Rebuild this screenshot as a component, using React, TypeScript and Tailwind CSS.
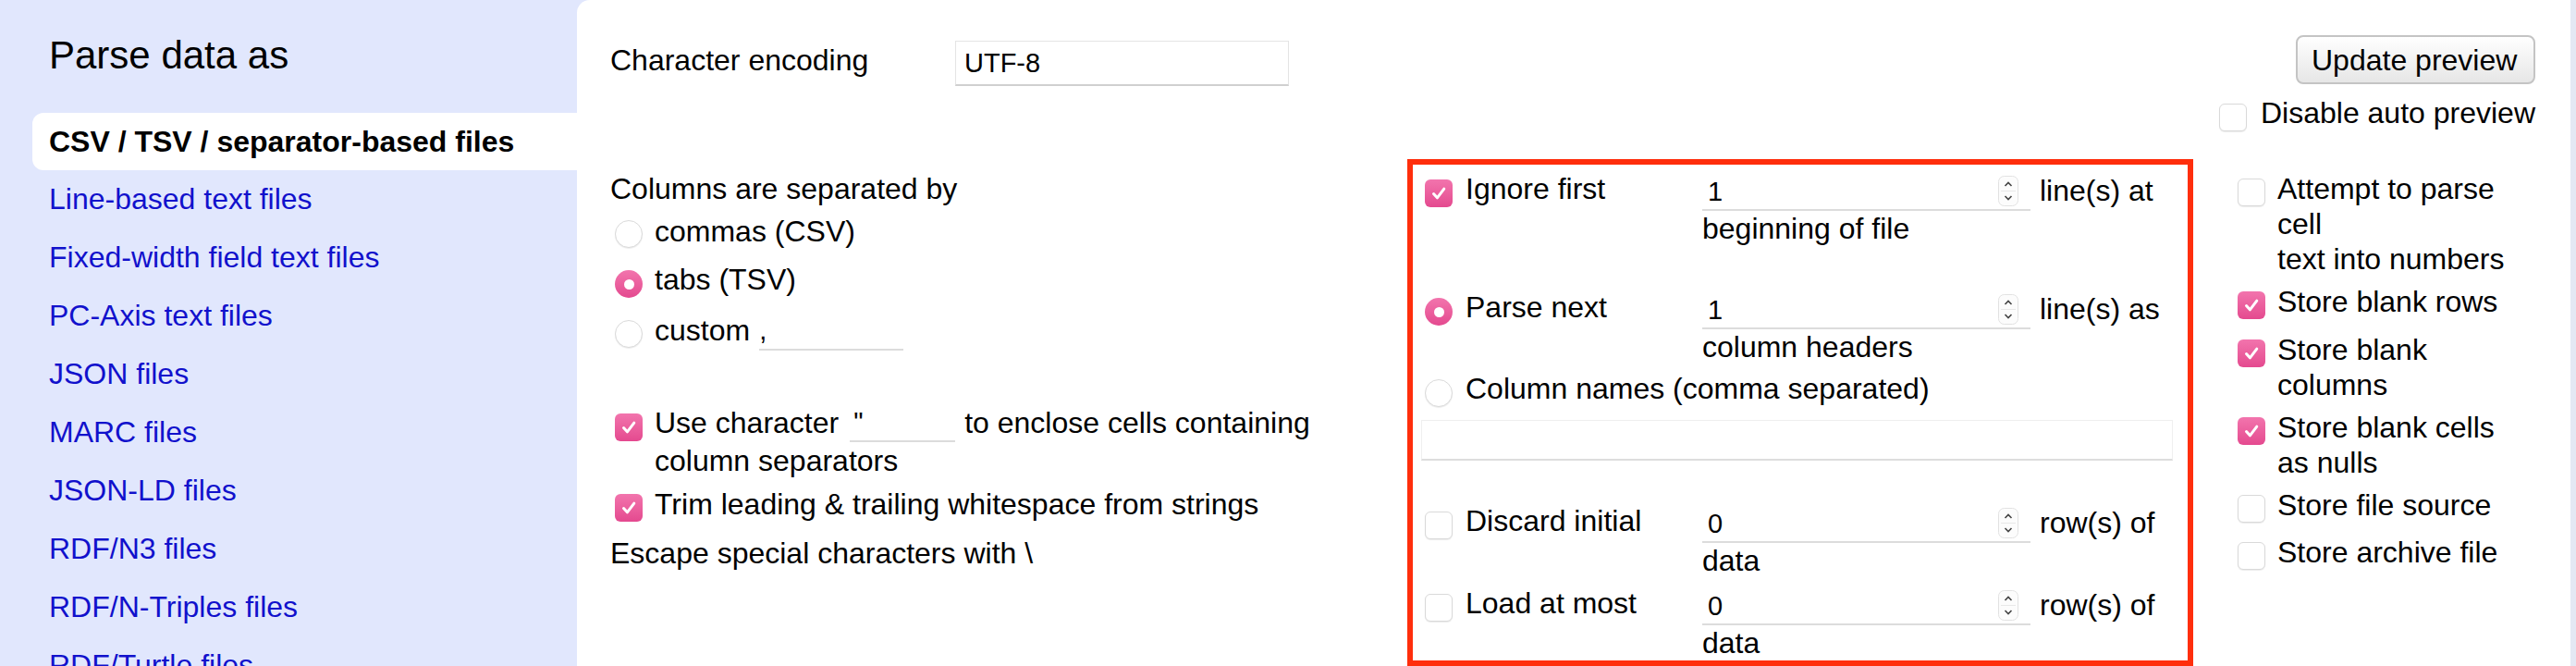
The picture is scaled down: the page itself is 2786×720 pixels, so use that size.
import React from 'react'

const links = [
  'Line-based text files',
  'Fixed-width field text files',
  'PC-Axis text files',
  'JSON files',
  'MARC files',
  'JSON-LD files',
  'RDF/N3 files',
  'RDF/N-Triples files',
  'RDF/Turtle files',
]

function CheckBox({ checked = false, className = '' }: { checked?: boolean; className?: string }) {
  if (checked) {
    return (
      <div className={`w-[30px] h-[30px] shrink-0 rounded-[6px] bg-linear-to-b from-[#f274ad] to-[#e4498f] flex items-center justify-center ${className}`}>
        <svg width="20" height="20" viewBox="0 0 20 20">
          <path d="M4.5 10.5 L8.4 14.8 L15.8 5.2" fill="none" stroke="white" strokeWidth="3" strokeLinecap="round" strokeLinejoin="round" />
        </svg>
      </div>
    )
  }
  return (
    <div className={`w-[30px] h-[30px] shrink-0 rounded-[6px] bg-white border border-[#d9d9d9] shadow-[0_1px_1px_rgba(0,0,0,0.08)] ${className}`} />
  )
}

function Radio({ checked = false, className = '' }: { checked?: boolean; className?: string }) {
  if (checked) {
    return (
      <div className={`w-[30px] h-[30px] shrink-0 rounded-full bg-linear-to-b from-[#f274ad] to-[#e4498f] flex items-center justify-center ${className}`}>
        <div className="w-[11px] h-[11px] rounded-full bg-white" />
      </div>
    )
  }
  return (
    <div className={`w-[30px] h-[30px] shrink-0 rounded-full bg-white border border-[#dadada] shadow-[0_1px_1px_rgba(0,0,0,0.08)] ${className}`} />
  )
}

function Spinner() {
  return (
    <svg width="22" height="33" viewBox="0 0 22 33" className="absolute right-[13px] top-[5px]">
      <rect x="0.5" y="0.5" width="21" height="32" rx="6" fill="#fcfcfc" stroke="#e2e2e2" />
      <line x1="3" y1="16.5" x2="19" y2="16.5" stroke="#e8e8e8" />
      <path d="M7.5 11 L11 7.5 L14.5 11" fill="none" stroke="#444" strokeWidth="1.6" />
      <path d="M7.5 22 L11 25.5 L14.5 22" fill="none" stroke="#444" strokeWidth="1.6" />
    </svg>
  )
}

function NumberRow({ control, label, value, after, below, className = '' }: {
  control: React.ReactNode
  label: string
  value: string
  after: string
  below: string
  className?: string
}) {
  return (
    <div className={className}>
      <div className="flex items-start h-[43px]">
        <div className="w-[300px] flex items-start gap-[14px]">
          <div className="mt-[9px]">{control}</div>
          <span className="leading-[38px] whitespace-nowrap">{label}</span>
        </div>
        <div className="relative w-[355px] h-[43px] border-b-2 border-[#dcdcdc] pl-[6px] pt-[3px] text-[29px] leading-[38px]">
          {value}
          <Spinner />
        </div>
        <span className="ml-[10px] pt-[2px] leading-[38px] whitespace-nowrap">{after}</span>
      </div>
      <div className="pl-[300px] leading-[38px]">{below}</div>
    </div>
  )
}

function Option({ checked, text, className = '' }: { checked?: boolean; text: React.ReactNode; className?: string }) {
  return (
    <div className={`flex items-start gap-[13px] ${className}`}>
      <CheckBox checked={checked} className="mt-[8px]" />
      <span className="w-[262px] leading-[38px]">{text}</span>
    </div>
  )
}

export default function App() {
  return (
    <div className="flex h-[720px] w-[2786px] overflow-hidden bg-[#e1e7fd] text-[32px] text-black font-['Liberation_Sans',Arial,sans-serif]">
      {/* Sidebar */}
      <div className="w-[624px] shrink-0 pt-[36px]">
        <h1 className="pl-[53px] text-[42px] leading-[48px] font-normal">Parse data as</h1>
        <div className="mt-[38px] ml-[35px] h-[62px] rounded-l-[12px] bg-white pl-[18px] font-bold leading-[62px] whitespace-nowrap">
          CSV / TSV / separator-based files
        </div>
        {links.map((l) => (
          <div key={l} className="h-[63px] pl-[53px] leading-[63px] text-[#11c] whitespace-nowrap">
            {l}
          </div>
        ))}
      </div>

      {/* Options panel */}
      <div className="flex-1 bg-white rounded-tl-[14px] pl-[36px] pr-[38px]">
        <div className="flex justify-between h-[172px]">
          <div className="flex items-start pt-[44px]">
            <span className="w-[373px] mt-[2px] leading-[38px]">Character encoding</span>
            <div className="w-[361px] h-[49px] border border-[#e4e4e4] border-b-2 border-b-[#d0d0d0] pl-[9px] text-[29px] leading-[46px]">
              UTF-8
            </div>
          </div>
          <div className="flex flex-col items-end pt-[38px]">
            <button className="w-[259px] h-[53px] rounded-[8px] border-2 border-[#c4c4c4] bg-linear-to-b from-white to-[#e6e6e6] flex items-center pl-[15px] text-[32px]">
              Update preview
            </button>
            <div className="mt-[12px] flex items-start gap-[15px]">
              <CheckBox className="mt-[9px]" />
              <span className="leading-[38px] whitespace-nowrap">Disable auto preview</span>
            </div>
          </div>
        </div>

        <div className="flex items-start">
          {/* Separator options */}
          <div className="w-[862px] shrink-0 pr-[40px] pt-[13px] flex flex-col">
            <div className="leading-[38px]">Columns are separated by</div>
            <div className="mt-[8px] ml-[5px] flex items-start gap-[13px]">
              <Radio className="mt-[7px]" />
              <span className="leading-[38px]">commas (CSV)</span>
            </div>
            <div className="mt-[14px] ml-[5px] flex items-start gap-[13px]">
              <Radio checked className="mt-[9px]" />
              <span className="leading-[38px]">tabs (TSV)</span>
            </div>
            <div className="mt-[16px] ml-[5px] flex items-start gap-[13px]">
              <Radio className="mt-[8px]" />
              <span className="leading-[38px]">custom</span>
              <div className="ml-[-3px] w-[156px] h-[41px] border-b-2 border-[#dcdcdc] text-[29px] leading-[38px]">,</div>
            </div>
            <div className="mt-[58px] ml-[5px] flex items-start gap-[13px]">
              <CheckBox checked className="mt-[10px]" />
              <div className="leading-[41px]">
                Use character
                <span className="inline-block align-top ml-[12px] mr-[10px] w-[114px] h-[41px] border-b-2 border-[#dcdcdc] pl-[4px] text-[29px] leading-[38px]">"</span>
                to enclose cells containing column separators
              </div>
            </div>
            <div className="mt-[7px] ml-[5px] flex items-start gap-[13px]">
              <CheckBox checked className="mt-[8px]" />
              <span className="leading-[38px]">Trim leading &amp; trailing whitespace from strings</span>
            </div>
            <div className="mt-[15px] leading-[38px]">Escape special characters with \</div>
          </div>

          {/* Header / row limits */}
          <div className="w-[850px] h-[548px] shrink-0 border-[6px] border-[#ff2e0c] pt-[7px] pl-[13px] flex flex-col">
            <NumberRow
              control={<CheckBox checked />}
              label="Ignore first"
              value="1"
              after="line(s) at"
              below="beginning of file"
            />
            <NumberRow
              className="mt-[47px]"
              control={<Radio checked />}
              label="Parse next"
              value="1"
              after="line(s) as"
              below="column headers"
            />
            <div className="mt-[7px] flex items-start gap-[14px]">
              <Radio className="mt-[9px]" />
              <span className="leading-[38px]">Column names (comma separated)</span>
            </div>
            <div className="mt-[14px] ml-[-4px] w-[813px] h-[49px] border border-[#efefef] border-b-2 border-b-[#dddddd]" />
            <NumberRow
              className="mt-[46px]"
              control={<CheckBox />}
              label="Discard initial"
              value="0"
              after="row(s) of"
              below="data"
            />
            <NumberRow
              className="mt-[8px]"
              control={<CheckBox />}
              label="Load at most"
              value="0"
              after="row(s) of"
              below="data"
            />
          </div>

          {/* Storage options */}
          <div className="ml-[48px] pt-[13px] flex flex-col">
            <Option text={<>Attempt to parse cell<br />text into numbers</>} />
            <Option checked className="mt-[8px]" text="Store blank rows" />
            <Option checked className="mt-[14px]" text="Store blank columns" />
            <Option checked className="mt-[8px]" text="Store blank cells as nulls" />
            <Option className="mt-[8px]" text="Store file source" />
            <Option className="mt-[13px]" text="Store archive file" />
          </div>
        </div>
      </div>

      <div className="w-[6px] shrink-0 bg-[#e4e8f4]" />
    </div>
  )
}
